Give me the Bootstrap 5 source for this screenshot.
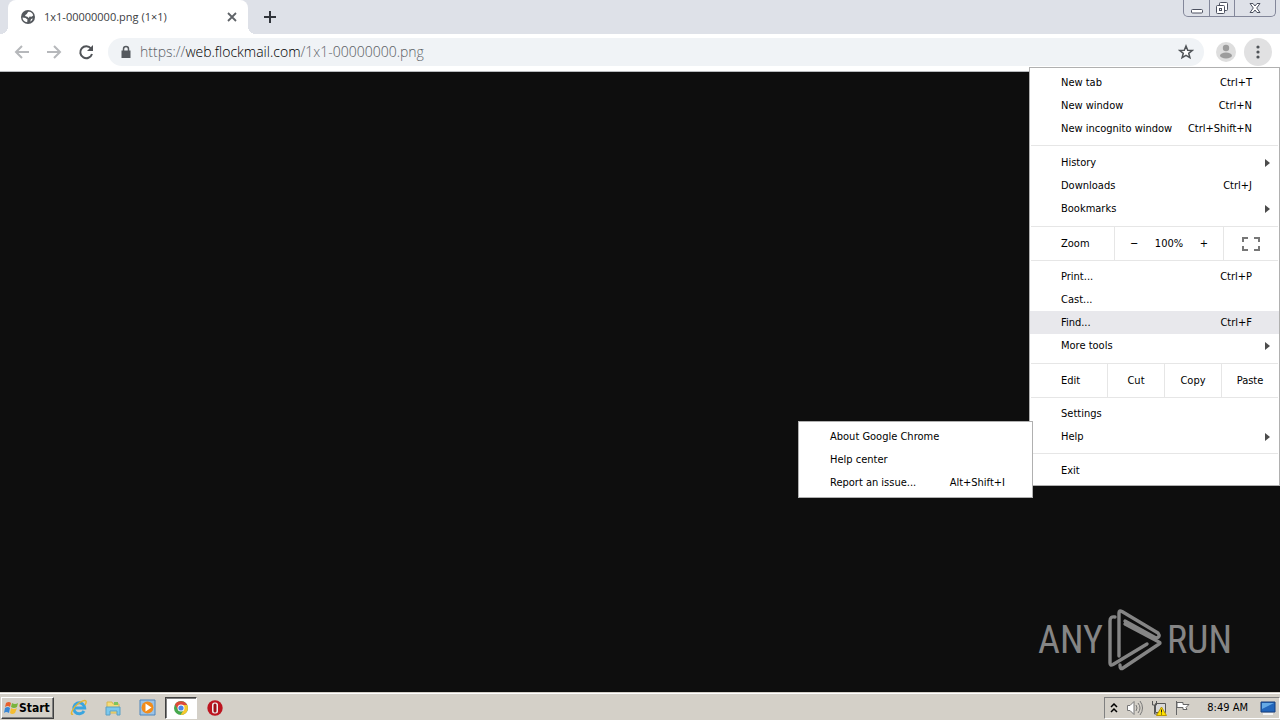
<!DOCTYPE html>
<html lang="en">
<head>
<meta charset="utf-8">
<meta name="viewport" content="width=device-width, initial-scale=1">
<title>1x1-00000000.png (1×1)</title>
<link rel="stylesheet" href="https://cdn.jsdelivr.net/npm/bootstrap@5.3.0/dist/css/bootstrap.min.css">
<style>
body{font:11px/16px "DejaVu Sans Condensed","DejaVu Sans",sans-serif;color:#000;background:#0e0e0e}
button{color:inherit;font:inherit;background:none;border:0;padding:0}
svg{display:block;flex:none}
.tab-strip{height:34px;background:#dee1e8;padding-left:8px}
.tab-page{width:240px;background:#fff;border-radius:8px 8px 0 0;padding:0 10px 0 12px;font-family:"Open Sans",sans-serif;color:#3c4043;position:relative}
.tab-page::before,.tab-page::after{content:"";position:absolute;bottom:0;width:8px;height:8px}
.tab-page::before{left:-8px;background:radial-gradient(circle at 0 0,#dee1e8 8px,#fff 8px)}
.tab-page::after{right:-8px;background:radial-gradient(circle at 100% 0,#dee1e8 8px,#fff 8px)}
.win-controls{height:17px;border:1px solid #83879a;border-top:0;border-radius:0 0 5px 5px;margin-right:4px}
.win-controls button{width:25px;display:grid;place-items:center}
.win-controls button+button{border-left:1px solid #83879a}
.win-controls .win-close{width:41px}
.tool-bar{height:38px;background:#fff;border-bottom:1px solid #b8babd;padding:0 8px 1px 12px}
.address{height:28px;background:#f0f3f6;border-radius:14px;padding:0 10px 0 12px;margin-left:12px;font:14px/20px "Open Sans Light","Open Sans",sans-serif;color:#5f6469}
.address b{font-weight:inherit;color:#000}
.menu-button{width:28px;height:28px;border-radius:50%;background:#e1e1e2;display:grid;place-items:center}
.pop-menu{position:absolute;background:#fff;border:1px solid #b0b0b0;padding:3px 0;z-index:5}
.main-menu{top:33px;right:-8px;width:251px}
.help-menu{top:-4px;right:246px;width:235px}
.menu-row{width:100%;height:23px;padding:1px 27px 0 31px;display:flex;align-items:center;justify-content:space-between;text-align:left;white-space:nowrap;position:relative}
.menu-row.active-row{background:#e8e8ec}
.menu-row.has-sub::after{content:"";position:absolute;right:9px;top:8px;border:4px solid transparent;border-left:5px solid #4c4c4c;border-right:0}
.menu-line{height:1px;background:#e6e6e6;margin:5px 1px}
.cell-row{height:35px;border:1px solid #e6e6e6;border-width:1px 0;margin:6px 1px 4px;padding-left:30px}
.cell-row button+button,.cell-row .zoom-cells,.cell-row .edit-cell{border-left:1px solid #e6e6e6}
.edit-cell{width:57px}
.zoom-cells{width:109px;padding:0 15px}
.full-cell{width:55px;border-left:1px solid #e6e6e6!important;display:grid;place-items:center}
.cell-row .plain-cell{border:0}
.any-logo{color:#858585;font:400 38px/60px "Roboto Condensed",sans-serif;padding:0 48px 20px 0}
.task-bar{height:28px;background:#d4d0c8;border-top:1px solid #d4d0c8;box-shadow:inset 0 1px #fff;padding:3px 0 1px 1px}
.start-button{width:53px;height:22px;border:1px solid;border-color:#fff #404040 #404040 #fff;box-shadow:inset -1px -1px #808080;font-weight:700;font-size:12px;padding-left:1px}
.task-icons{padding-left:9px}
.task-icons button{width:32px;height:22px;margin-right:2px;display:grid;place-items:center}
.task-icons .running{background:#fff;border:1px solid;border-color:#404040 #fff #fff #404040;box-shadow:inset 1px 1px #808080}
.tray{border:1px solid;border-color:#808080 #fff #fff #808080;height:22px;padding:0 3px 0 5px}
</style>
</head>
<body class="d-flex flex-column min-vh-100">
<header>
  <div class="tab-strip d-flex">
    <div class="tab-page d-flex align-items-center">
      <svg width="16" height="16" viewBox="0 0 16 16"><circle cx="8" cy="8" r="7" fill="#54585d"/><path d="M2.500 8.500 5.500 9l2 1.500-.3 2.800C4.500 13 2.500 11 2.500 8.500zM8 3c2-.8 4.500.7 5.200 3.400l-1.700 1.400-2-.3L8.800 9 7 7.500 5.800 7.600 5 6.300 6.800 5zM11 10l1.800-.4c-.5 1.500-1.300 2.500-2.600 3.100z" fill="#fff"/></svg>
      <span class="ms-2 flex-grow-1 text-nowrap">1x1-00000000.png (1×1)</span>
      <button aria-label="Close tab"><svg width="12" height="12" viewBox="0 0 12 12"><path d="m2 2 8 8m0-8-8 8" stroke="#5f6368" stroke-width="1.800"/></svg></button>
    </div>
    <button class="ms-3" aria-label="New tab"><svg width="12" height="12" viewBox="0 0 12 12"><path d="M6 0v12M0 6h12" stroke="#30343a" stroke-width="2"/></svg></button>
    <div class="win-controls d-flex ms-auto">
      <button aria-label="Minimize"><svg width="12" height="14"><rect x=".5" y="8.500" width="11" height="3.500" rx="1" fill="#fff" stroke="#4c5160"/></svg></button>
      <button aria-label="Restore"><svg width="14" height="14" fill="#fff" stroke="#4c5160"><rect x="4.500" y="1.500" width="8" height="8" rx="1"/><rect x="1.500" y="4.500" width="8" height="8" rx="1"/><rect x="4.500" y="7.500" width="2" height="2"/></svg></button>
      <button class="win-close" aria-label="Close"><svg width="14" height="12"><path d="M2 1.500h3L7 4l2-2.500h3L8.700 6l3.300 4.500H9L7 8l-2 2.500H2L5.300 6z" fill="#fff" stroke="#4c5160"/></svg></button>
    </div>
  </div>
  <div class="tool-bar d-flex align-items-center position-relative">
    <button class="me-2" aria-label="Back"><svg width="20" height="20" fill="none" stroke="#b6b8bb" stroke-width="2"><path d="M17 10H4M10 4l-6 6 6 6"/></svg></button>
    <button class="ms-1 me-2" aria-label="Forward"><svg width="20" height="20" fill="none" stroke="#b6b8bb" stroke-width="2"><path d="M3 10h13M10 4l6 6-6 6"/></svg></button>
    <button class="ms-1" aria-label="Reload"><svg width="20" height="20"><path d="M15 6.500A6 6 0 1 0 16 12" fill="none" stroke="#505357" stroke-width="2"/><path d="M17 3v6h-6z" fill="#505357"/></svg></button>
    <div class="address d-flex align-items-center flex-grow-1">
      <svg width="12" height="14"><path d="M1.500 5.500h9V13h-9z" fill="#55595e"/><path d="M3.500 6V4a2.500 2.500 0 0 1 5 0v2" fill="none" stroke="#55595e" stroke-width="1.500"/></svg>
      <span class="flex-grow-1 text-nowrap ps-2">https://<b>web.flockmail.com</b>/1x1-00000000.png</span>
      <button aria-label="Bookmark this page"><svg width="16" height="16" viewBox="0 0 16 16"><path d="m8 2 1.700 4.200 4.500.3-3.500 2.800 1.200 4.400L8 11.300l-3.900 2.400 1.200-4.400L1.800 6.500l4.500-.3z" fill="#fff" stroke="#505458" stroke-width="1.500"/></svg></button>
    </div>
    <button class="ms-2 me-2 ps-1" aria-label="Profile"><svg width="20" height="20"><circle cx="10" cy="10" r="10" fill="#dedede"/><circle cx="10" cy="6" r="3.200" fill="#9c9c9c"/><ellipse cx="10" cy="13.500" rx="6" ry="3" fill="#9c9c9c"/></svg></button>
    <button class="menu-button" aria-label="Menu"><svg width="4" height="14" fill="#505458"><circle cx="2" cy="2" r="1.600"/><circle cx="2" cy="7" r="1.600"/><circle cx="2" cy="12" r="1.600"/></svg></button>
    <div class="position-absolute end-0 top-0 me-2">
    <nav class="pop-menu main-menu">
      <button class="menu-row"><span>New tab</span><span>Ctrl+T</span></button>
      <button class="menu-row"><span>New window</span><span>Ctrl+N</span></button>
      <button class="menu-row"><span>New incognito window</span><span>Ctrl+Shift+N</span></button>
      <div class="menu-line"></div>
      <button class="menu-row has-sub">History</button>
      <button class="menu-row"><span>Downloads</span><span>Ctrl+J</span></button>
      <button class="menu-row has-sub">Bookmarks</button>
      <div class="cell-row d-flex">
        <span class="align-self-center flex-grow-1">Zoom</span>
        <div class="zoom-cells d-flex align-items-center justify-content-between"><button class="plain-cell" aria-label="Zoom out">−</button><span>100%</span><button class="plain-cell" aria-label="Zoom in">+</button></div>
        <button class="full-cell" aria-label="Full screen"><svg width="18" height="14" fill="none" stroke="#777" stroke-width="2"><path d="M1 5V1h5M12 1h5v4M17 9v4h-5M6 13H1V9"/></svg></button>
      </div>
      <button class="menu-row"><span>Print...</span><span>Ctrl+P</span></button>
      <button class="menu-row">Cast...</button>
      <button class="menu-row active-row"><span>Find...</span><span>Ctrl+F</span></button>
      <button class="menu-row has-sub">More tools</button>
      <div class="cell-row d-flex">
        <span class="align-self-center flex-grow-1">Edit</span>
        <button class="edit-cell">Cut</button><button class="edit-cell">Copy</button><button class="edit-cell">Paste</button>
      </div>
      <button class="menu-row">Settings</button>
      <div class="position-relative">
        <button class="menu-row has-sub">Help</button>
        <div class="pop-menu help-menu">
          <button class="menu-row"><span>About Google Chrome</span></button>
          <button class="menu-row"><span>Help center</span></button>
          <button class="menu-row"><span>Report an issue...</span><span>Alt+Shift+I</span></button>
        </div>
      </div>
      <div class="menu-line"></div>
      <button class="menu-row">Exit</button>
    </nav>
    </div>
  </div>
</header>
<main class="flex-grow-1 d-flex align-items-end justify-content-end">
  <div class="any-logo d-flex align-items-center"><span>ANY</span>
    <svg class="mx-1" width="56" height="64" viewBox="0 0 56 64" fill="none" stroke="#858585" stroke-width="3.400" stroke-linecap="round" stroke-linejoin="round"><path d="M8 9Q3 8 3 13v42q0 3 3 1.500L40 36"/><path d="M12 48V5q0-3 3-1.500L51 25q3 4-2 5L18 13M18 16l34 18q2 1 0 2L16 60q-3 2-3-3"/></svg>
    <span>RUN</span></div>
</main>
<footer class="task-bar d-flex align-items-center">
  <button class="start-button d-flex align-items-center"><svg width="16" height="16"><path d="M3 3q3-2 5 0L7 7Q5 5 2 7z" fill="#e8602c"/><path d="M9 3q3 2 6 0l-1 4q-3 2-6 0z" fill="#79b43c"/><path d="M2 8q3-2 5 0l-1 5q-3-2-5 0z" fill="#3987d5"/><path d="M8 8q3 2 6 0l-2 5q-3 2-5 0z" fill="#f5bd31"/></svg><span>Start</span></button>
  <nav class="task-icons d-flex">
    <button aria-label="Internet Explorer"><svg width="18" height="18" fill="none"><path d="M14 12a5.500 5.500 0 1 1 .7-3H5" stroke="#3aa5df" stroke-width="3"/><path d="M3 15C-1 17 3 8 9 4s9-3 6 2" stroke="#e6b62e" stroke-width="1.400"/></svg></button>
    <button aria-label="Explorer"><svg width="18" height="18"><path d="M3 3h5l1 2h6v9H3z" fill="#f5dc7b" stroke="#d8b84e"/><path d="M2 8h14v8h-3v-4H6v4H2z" fill="#7bc8ed" stroke="#5b9fc4"/><path d="M10 3h4v3h-4z" fill="#7ec45c"/></svg></button>
    <button aria-label="Media Player"><svg width="17" height="17"><path d="M1 1h15v15H1z" fill="#9cc3e6" stroke="#4e86bd"/><circle cx="8.500" cy="8.500" r="6" fill="#f28c1b"/><path d="m6.500 4.500 6 4-6 4z" fill="#fff"/></svg></button>
    <button class="running" aria-label="Chrome"><svg width="16" height="16" viewBox="0 0 16 16"><circle cx="8" cy="8" r="7" fill="#46a84d"/><path d="M2 4.500A7 7 0 0 1 14.200 5H8L5 9.700z" fill="#df4939"/><path d="M14.200 5A7 7 0 0 1 7.500 15L11 9.500 8 5z" fill="#f7c72d"/><circle cx="8" cy="8" r="3.500" fill="#fff"/><circle cx="8" cy="8" r="2.600" fill="#4a86e8"/></svg></button>
    <button aria-label="Opera"><svg width="16" height="16"><circle cx="8" cy="8" r="7.700" fill="#bd1520"/><rect x="5" y="2.500" width="6" height="11" rx="2.500" fill="#eee"/><rect x="6.500" y="3.500" width="3" height="9" rx="1.500" fill="#9d1018"/></svg></button>
  </nav>
  <div class="tray d-flex align-items-center ms-auto">
    <button class="me-2" aria-label="Show hidden icons"><svg width="8" height="10" fill="none" stroke="#000" stroke-width="1.500"><path d="m1 4 3-3 3 3M1 9l3-3 3 3"/></svg></button>
    <button class="me-2" aria-label="Volume"><svg width="17" height="16" fill="none" stroke="#777"><path d="M1.500 5.500H4l4-4v13l-4-4H1.500z" fill="#fff"/><path d="M10 5q2 3 0 6M12 3q4 5 0 10M14 1q5 7 0 14"/></svg></button>
    <button class="me-2" aria-label="Network"><svg width="16" height="16"><path d="M4.500 3.500h10v9h-10z" fill="#d8d8d8" stroke="#555"/><path d="M1.500 1v4h4V1M3.500 5v9H8" fill="none" stroke="#555"/><path d="m10.500 7 5 8.500h-10z" fill="#ffe100" stroke="#b99600"/><path d="M10.500 9.500v3M10.500 13.500v1" stroke="#222"/></svg></button>
    <button class="me-3" aria-label="Action Center"><svg width="16" height="16"><path d="M1.500 1v14M2 2.500h6v2h6l-3 3 1 2H8v-2H2z" fill="#fff" stroke="#666"/></svg></button>
    <span class="me-2 pe-1">8:49 AM</span>
    <button aria-label="Show desktop"><svg width="16" height="16"><path d="M1 2h14v10H1z" fill="#2366bb" stroke="#173f7e"/><path d="M2 3h12L2 9z" fill="#65a9e5"/><path d="M3 14h10" stroke="#f4f4f4" stroke-width="2"/></svg></button>
  </div>
</footer>
<script src="https://cdn.jsdelivr.net/npm/bootstrap@5.3.0/dist/js/bootstrap.bundle.min.js"></script>
</body>
</html>
